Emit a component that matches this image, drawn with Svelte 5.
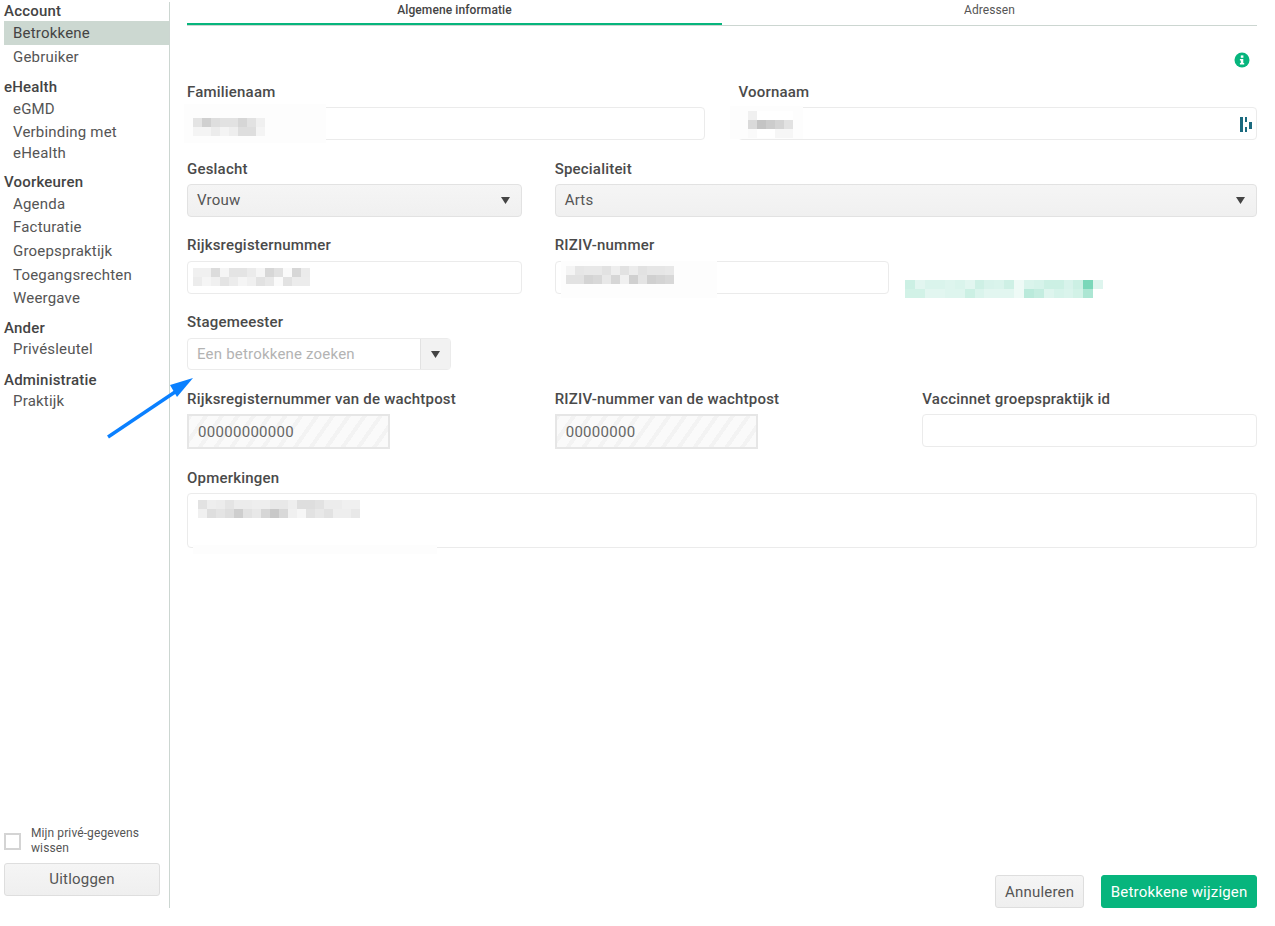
<script>
    const menu = [
        { title: "Account", items: ["Betrokkene", "Gebruiker"] },
        { title: "eHealth", items: ["eGMD", "Verbinding met eHealth"] },
        { title: "Voorkeuren", items: ["Agenda", "Facturatie", "Groepspraktijk", "Toegangsrechten", "Weergave"] },
        { title: "Ander", items: ["Privésleutel"] },
        { title: "Administratie", items: ["Praktijk"] },
    ];

    // redacted values: each row is a list of cell darkness values
    const blurs = {
        familie: [[228, 208, 222, 226, 226, 214, 226, 240], [244, 244, 236, 244, 238, 222, 222, 244]],
        voornaam: [[240, 255, 255, 255, 255], [218, 196, 204, 212, 226], [250, 255, 255, 246, 246]],
        rijks: [[240, 240, 220, 245, 228, 228, 235, 245, 215, 225, 250, 215, 235], [236, 245, 240, 228, 236, 245, 240, 226, 232, 250, 226, 236, 236]],
        riziv: [[244, 230, 232, 232, 226, 238, 226, 236, 226, 230, 230, 232], [226, 226, 212, 216, 232, 214, 240, 208, 228, 208, 212, 216]],
        note: [[226, 238, 236, 228, 236, 236, 238, 238, 232, 232, 238, 222, 222, 226, 236, 236, 240, 240], [240, 222, 228, 222, 206, 226, 232, 214, 200, 216, 240, 246, 226, 232, 226, 238, 238, 232]],
    };
    const greenRows = [
        [204, 226, 218, 218, 222, 218, 226, 206, 216, 218, 206, 238, 218, 214, 204, 204, 216, 204, 122, 222],
        [210, 210, 226, 226, 222, 222, 204, 218, 226, 226, 226, 238, 186, 196, 222, 214, 218, 210, 172, 255],
    ];
    const cell = (v) => `background: rgb(${v},${v},${v})`;
    // tint of the brand green on white, same lightness scale as the grey cells
    const greenCell = (v) => {
        const a = (255 - v) / 248;
        return `background: rgb(${v},${Math.round(255 - a * 74)},${Math.round(255 - a * 130)})`;
    };
</script>

{#snippet blur(rows)}
    <div class="blur">
        {#each rows as row}
            <div class="blur-row">
                {#each row as v}
                    <span style={cell(v)}></span>
                {/each}
            </div>
        {/each}
    </div>
{/snippet}

{#snippet caret()}
    <svg class="caret" viewBox="0 0 9 7" width="9" height="7"><path d="M0 0H9L4.5 7Z" fill="#444" /></svg>
{/snippet}

<div class="page">
    <aside class="sidebar">
        <nav>
            {#each menu as group}
                <h4>{group.title}</h4>
                <ul>
                    {#each group.items as item}
                        <li class:active={item === "Betrokkene"}>{item}</li>
                    {/each}
                </ul>
            {/each}
        </nav>
        <div class="side-bottom">
            <label class="wipe">
                <span class="box"></span>
                <span>Mijn privé-gegevens wissen</span>
            </label>
            <button class="btn logout">Uitloggen</button>
        </div>
    </aside>

    <main>
        <div class="tabs">
            <div class="tab current">Algemene informatie</div>
            <div class="tab">Adressen</div>
        </div>

        <div class="info-row">
            <svg viewBox="0 0 16 16" width="16" height="16">
                <circle cx="8" cy="8" r="7.5" fill="#07b57d" />
                <rect x="6.8" y="3.4" width="2.6" height="2.4" fill="#fff" />
                <path d="M5.9 7H9.3V11H10.2V12.4H5.9V11H6.8V8.4H5.9Z" fill="#fff" />
            </svg>
        </div>

        <form>
            <div class="field span3">
                <label>Familienaam</label>
                <div class="input"></div>
                <div class="patch p-familie">{@render blur(blurs.familie)}</div>
            </div>
            <div class="field span3">
                <label>Voornaam</label>
                <div class="input">
                    <svg class="dash" viewBox="0 0 12 15" width="12" height="15">
                        <rect x="0" y="0" width="3" height="15" fill="#1b6a7f" />
                        <rect x="5" y="0" width="2" height="5" fill="#1b6a7f" />
                        <rect x="5" y="10" width="2" height="5" fill="#1b6a7f" />
                        <rect x="9" y="5" width="3" height="7" fill="#1b6a7f" />
                    </svg>
                </div>
                <div class="patch p-voornaam">{@render blur(blurs.voornaam)}</div>
            </div>

            <div class="field span2">
                <label>Geslacht</label>
                <div class="select">Vrouw {@render caret()}</div>
            </div>
            <div class="field span4">
                <label>Specialiteit</label>
                <div class="select">Arts {@render caret()}</div>
            </div>

            <div class="field span2 raised">
                <label>Rijksregisternummer</label>
                <div class="input"></div>
                <div class="p-rijks">{@render blur(blurs.rijks)}</div>
            </div>
            <div class="field span2 raised">
                <label>RIZIV-nummer</label>
                <div class="input"></div>
                <div class="patch p-riziv">{@render blur(blurs.riziv)}</div>
            </div>
            <div class="field span2 green-wrap">
                <div class="blur green">
                    {#each greenRows as row}
                        <div class="blur-row">
                            {#each row as v}
                                <span style={v === 255 ? "" : greenCell(v)}></span>
                            {/each}
                        </div>
                    {/each}
                </div>
            </div>

            <div class="field span2 raised">
                <label>Stagemeester</label>
                <div class="combo">
                    <div class="combo-text">Een betrokkene zoeken</div>
                    <div class="combo-btn">{@render caret()}</div>
                </div>
            </div>
            <div class="field span4"></div>

            <div class="field span2 raised tight">
                <label>Rijksregisternummer van de wachtpost</label>
                <div class="disabled">00000000000</div>
            </div>
            <div class="field span2 raised tight">
                <label>RIZIV-nummer van de wachtpost</label>
                <div class="disabled">00000000</div>
            </div>
            <div class="field span2 raised tight">
                <label>Vaccinnet groepspraktijk id</label>
                <div class="input"></div>
            </div>

            <div class="field span6 last">
                <label>Opmerkingen</label>
                <div class="input area"></div>
                <div class="p-note">{@render blur(blurs.note)}</div>
                <div class="patch p-strip"></div>
            </div>
        </form>

        <div class="actions">
            <button class="btn">Annuleren</button>
            <button class="btn primary">Betrokkene wijzigen</button>
        </div>
    </main>

    <svg class="arrow" viewBox="0 0 90 66" width="90" height="66">
        <path d="M2 62L72 15" stroke="#0a80ff" stroke-width="3.4" fill="none" />
        <path d="M87 3L64 10L71 22Z" fill="#0a80ff" />
    </svg>
</div>

<style>
    :global(body) {
        background: #fff;
        font-family: Roboto, "Noto Sans", sans-serif;
        letter-spacing: 0.2px;
        color: #4a4a4a;
    }

    .page {
        position: relative;
        display: flex;
        height: 908px;
        padding-top: 2px;
        box-sizing: border-box;
    }

    .sidebar {
        width: 170px;
        flex: none;
        box-sizing: border-box;
        border-right: 1px solid #ccd6d1;
        padding-left: 4px;
        display: flex;
        flex-direction: column;
        justify-content: space-between;
    }

    h4 {
        margin: 0;
        font-size: 15px;
        font-weight: 500;
        line-height: 19px;
        color: #444;
    }

    ul {
        list-style: none;
        margin: 0 0 8px;
        padding: 0;
    }

    ul:first-of-type {
        margin-bottom: 10px;
    }

    ul:nth-of-type(4) {
        margin-bottom: 9.5px;
    }

    li {
        font-size: 15px;
        line-height: 20.5px;
        padding: 1.3px 9px 1.9px;
        color: #555;
    }

    ul:first-of-type li {
        padding: 2.2px 9px 1px;
    }

    li.active {
        background: #ccd8d1;
        color: #444;
    }

    .side-bottom {
        padding-bottom: 12px;
        padding-right: 9px;
    }

    .wipe {
        display: flex;
        align-items: center;
        gap: 10px;
        font-size: 12px;
        letter-spacing: 0.1px;
        line-height: 15px;
        color: #555;
        margin-bottom: 7px;
    }

    .box {
        width: 13px;
        height: 13px;
        flex: none;
        border: 2px solid #d4d4d4;
    }

    .btn {
        font: inherit;
        font-size: 15px;
        letter-spacing: 0.2px;
        height: 33px;
        padding: 0 9px;
        color: #555;
        background: linear-gradient(#f5f5f5, #efefef);
        border: 1px solid #dedede;
        border-radius: 3px;
    }

    .logout {
        width: 100%;
        display: block;
        padding-bottom: 2px;
    }

    main {
        flex: 1;
        min-width: 0;
        padding: 0 18px 0 17px;
        display: flex;
        flex-direction: column;
    }

    .tabs {
        display: flex;
        margin-top: -2px;
        height: 25px;
        border-bottom: 1px solid #ccd6d1;
        flex: none;
    }

    .tab {
        flex: 1;
        text-align: center;
        font-size: 12px;
        letter-spacing: 0.1px;
        line-height: 20px;
        color: #555;
    }

    .tab.current {
        color: #444;
        font-weight: 500;
        border-bottom: 2px solid #07b57d;
        height: 23px;
    }

    .info-row {
        display: flex;
        justify-content: flex-end;
        padding: 26px 7px 0 0;
        height: 16px;
    }

    form {
        display: grid;
        grid-template-columns: repeat(6, 1fr);
        column-gap: 33px;
        margin-top: 14px;
    }

    .field {
        position: relative;
        min-width: 0;
        height: 77px;
    }

    .span2 { grid-column: span 2; }
    .span3 { grid-column: span 3; }
    .span4 { grid-column: span 4; }
    .span6 { grid-column: span 6; }

    label {
        display: block;
    }

    .field > label {
        font-size: 15px;
        font-weight: 500;
        line-height: 20px;
        height: 25px;
        color: #4a4a4a;
    }

    .raised > label {
        margin-top: -1px;
        height: 26px;
    }

    .tight > label {
        height: 25px;
    }

    .last {
        margin-top: 1px;
    }

    .input {
        position: relative;
        box-sizing: border-box;
        height: 33px;
        background: #fff;
        border: 1px solid #ebebeb;
        border-radius: 4px;
    }

    .input.area {
        height: 55px;
    }

    .dash {
        position: absolute;
        right: 4px;
        top: 9px;
    }

    .select {
        box-sizing: border-box;
        height: 33px;
        display: flex;
        align-items: center;
        justify-content: space-between;
        padding: 0 11px 1px 9px;
        font-size: 15px;
        color: #555;
        background: linear-gradient(#f5f5f5, #f0f0f0);
        border: 1px solid #e2e2e2;
        border-radius: 4px;
    }

    .combo {
        box-sizing: border-box;
        display: flex;
        width: 264px;
        height: 32px;
        border: 1px solid #ebebeb;
        border-radius: 4px;
        font-size: 15px;
    }

    .combo-text {
        flex: 1;
        padding-left: 9px;
        line-height: 30px;
        color: #b3b3b3;
    }

    .combo-btn {
        width: 29px;
        display: flex;
        align-items: center;
        justify-content: center;
        background: #f2f2f2;
        border-left: 1px solid #e2e2e2;
    }

    .disabled {
        box-sizing: border-box;
        width: 203px;
        height: 35px;
        padding-left: 9px;
        line-height: 32px;
        font-size: 15px;
        letter-spacing: 0.3px;
        color: #666;
        border: 2px solid #e6e6e6;
        background: repeating-linear-gradient(-55deg, #fafafa 0 9px, #f3f3f3 9px 13px);
    }

    /* white smudges left by the redaction, they run over the input borders */
    .patch {
        position: absolute;
        box-sizing: border-box;
        background: #fdfdfd;
    }

    .p-familie { left: -3px; top: 22px; width: 142px; height: 39px; padding: 14px 0 0 9px; }
    .p-voornaam { left: -8px; top: 24px; width: 73px; height: 33px; padding: 5px 0 0 18px; }
    .p-rijks { position: absolute; left: 6px; top: 32px; }
    .p-riziv { left: 6px; top: 25px; width: 156px; height: 37px; padding: 5px 0 0 5px; }
    .p-note { position: absolute; left: 11px; top: 32px; }
    .p-strip { left: 6px; top: 77px; width: 244px; height: 9px; }

    .blur {
        display: flex;
        flex-direction: column;
    }

    .blur-row {
        display: flex;
    }

    .blur-row span {
        display: block;
        flex: none;
        width: 9px;
        height: 9px;
    }

    .green-wrap {
        padding-top: 44px;
        margin-left: -17px;
        margin-right: 17px;
        box-sizing: border-box;
    }

    .green .blur-row span {
        width: 9.9px;
    }

    .actions {
        margin-top: auto;
        display: flex;
        justify-content: flex-end;
        gap: 17px;
    }

    .primary {
        color: #fff;
        background: #07b57d;
        border-color: #07b57d;
        padding: 0 8.5px;
    }

    .arrow {
        position: absolute;
        left: 106px;
        top: 375px;
    }
</style>
